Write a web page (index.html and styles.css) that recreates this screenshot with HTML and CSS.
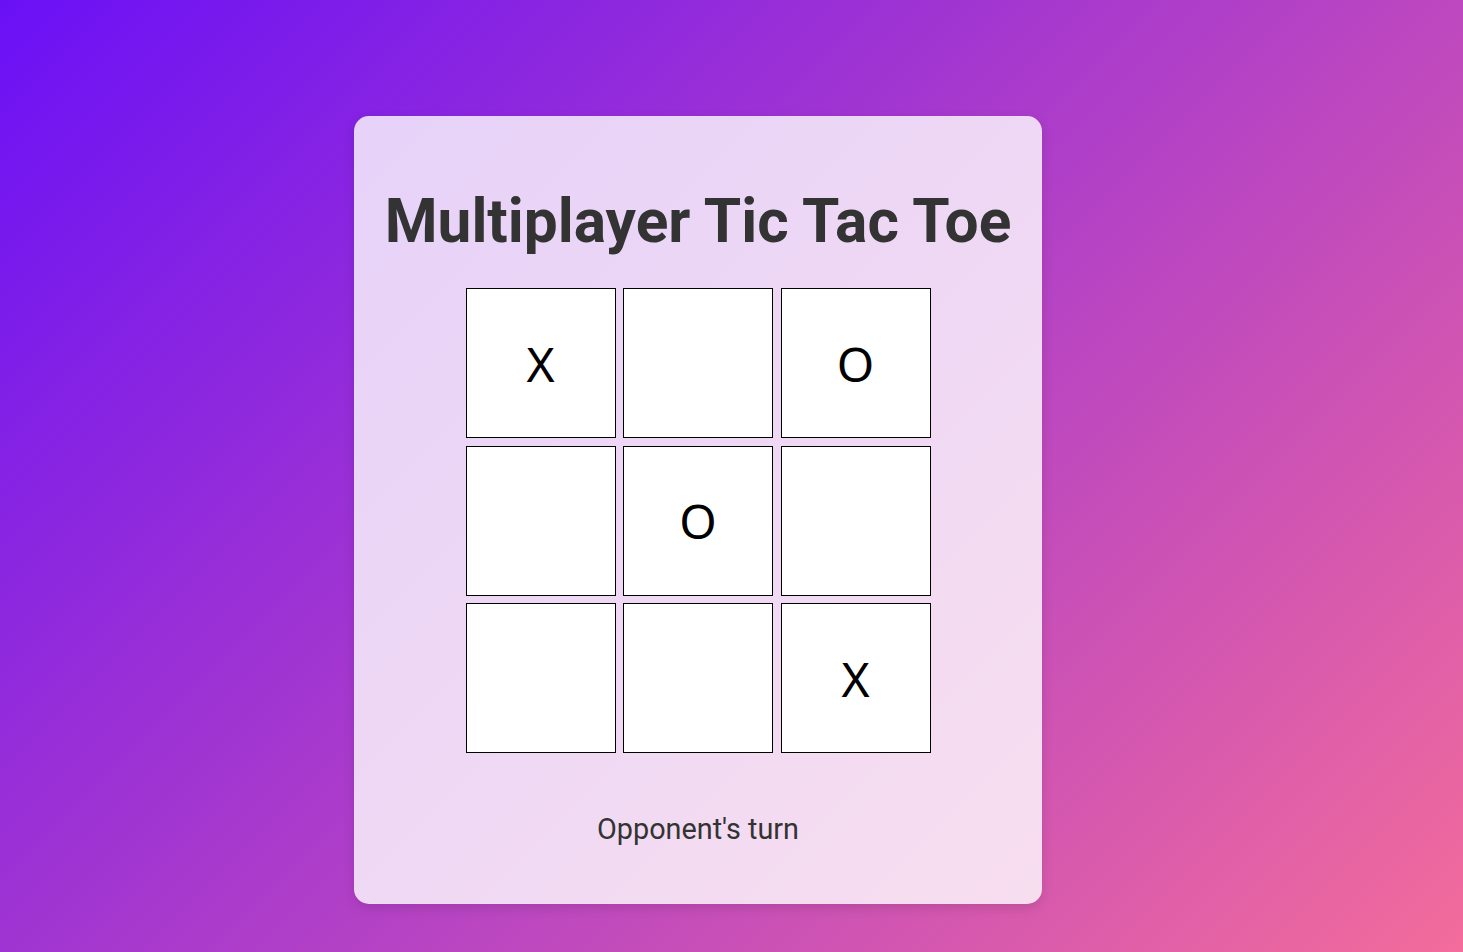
FILE: index.html
```html
<!DOCTYPE html>
<html lang="en">
<head>
<meta charset="utf-8">
<title>Multiplayer Tic Tac Toe</title>
<link rel="stylesheet" href="styles.css">
</head>
<body>
<main class="card">
  <h1 class="title">Multiplayer Tic Tac Toe</h1>
  <div class="board">
    <button class="cell">X</button>
    <button class="cell"></button>
    <button class="cell">O</button>
    <button class="cell"></button>
    <button class="cell">O</button>
    <button class="cell"></button>
    <button class="cell"></button>
    <button class="cell"></button>
    <button class="cell">X</button>
  </div>
  <p class="status">Opponent's turn</p>
</main>
</body>
</html>
```

FILE: styles.css
```css
html, body {
  margin: 0;
  padding: 0;
}
body {
  min-height: 952px;
  background: linear-gradient(135deg, #6a10f6 0%, #f36c9b 100%);
  font-family: Roboto, "Liberation Sans", sans-serif;
  color: #333;
  overflow: hidden;
}
.card {
  box-sizing: border-box;
  width: 688px;
  height: 788px;
  margin: 116px 0 0 354px;
  padding-top: 71px;
  background: rgba(255, 255, 255, 0.8);
  border-radius: 15px;
  box-shadow: 0 4px 12px rgba(0, 0, 0, 0.12);
  display: flex;
  flex-direction: column;
  align-items: center;
}
.title {
  margin: 0;
  font-size: 60.4px;
  font-weight: 700;
  line-height: 70px;
  color: #333;
}
.board {
  margin-top: 31px;
  display: grid;
  grid-template-columns: repeat(3, 150px);
  grid-template-rows: repeat(3, 150px);
  gap: 7.5px;
}
.cell {
  box-sizing: border-box;
  width: 150px;
  height: 150px;
  margin: 0;
  padding: 0;
  background: #fff;
  border: 1px solid #000;
  border-radius: 0;
  font-family: "Noto Sans", "Open Sans", sans-serif;
  font-size: 48px;
  color: #000;
  display: flex;
  align-items: center;
  justify-content: center;
}
.status {
  margin: 59px 0 0;
  font-size: 28.8px;
  line-height: 34px;
  color: #333;
}
```
